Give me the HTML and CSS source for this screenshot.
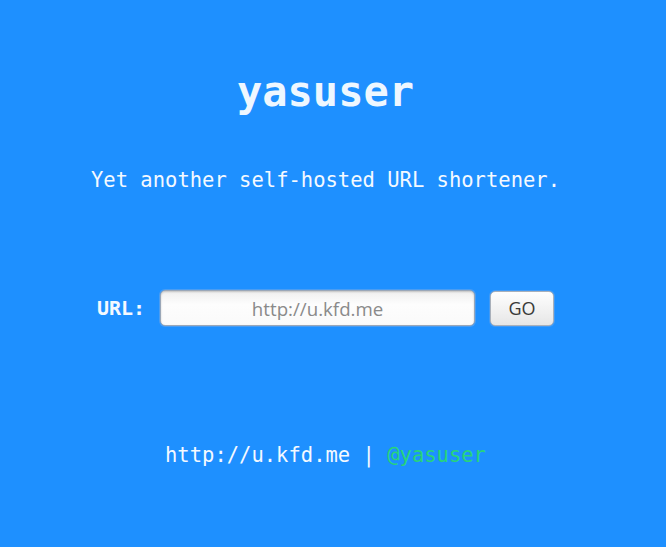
FILE: index.html
```html
<!DOCTYPE html>
<html>
<head>
<meta charset="utf-8">
<link rel="stylesheet" href="styles.css">
</head>
<body>
<main class="page">
  <h1 class="title">yasuser</h1>
  <p class="tagline">Yet another self-hosted URL shortener.</p>
  <form class="shorten">
    <label class="label" for="url">URL:</label>
    <input class="url-input" id="url" type="text" placeholder="http://u.kfd.me">
    <button class="go" type="button">GO</button>
  </form>
  <footer class="footer">http://u.kfd.me | <a class="handle" href="#">@yasuser</a></footer>
</main>
</body>
</html>
```
FILE: styles.css
```css
html, body {
  margin: 0;
  padding: 0;
  background: #1e90ff;
  height: 100%;
}
.page {
  box-sizing: border-box;
  width: 651px;
  display: flex;
  flex-direction: column;
  align-items: center;
  font-family: "DejaVu Sans Mono", monospace;
  color: #f4f9ff;
  padding-top: 66px;
}
.title {
  margin: 0;
  font-size: 42px;
  line-height: 52px;
  font-weight: bold;
  color: #eef7ff;
}
.tagline {
  margin: 50px 0 0 0;
  font-size: 20.5px;
  line-height: 24px;
}
.shorten {
  margin-top: 98px;
  display: flex;
  align-items: center;
  gap: 15px;
}
.label {
  font-weight: bold;
  font-size: 20px;
  line-height: 24px;
}
.url-input {
  box-sizing: border-box;
  width: 315px;
  height: 36px;
  border: 1px solid #9aa7b8;
  border-radius: 5px;
  background: linear-gradient(#efefef, #fdfdfd 40%, #fafafa);
  box-shadow: inset 0 1px 2px rgba(0,0,0,0.2), 0 0 0 1px rgba(120,170,230,0.5);
  font-family: "Open Sans", "DejaVu Sans", sans-serif;
  font-size: 18.7px;
  text-align: center;
  color: #333;
  padding: 0 8px;
  outline: none;
}
.url-input::placeholder {
  color: #8a8a8a;
}
.go {
  box-sizing: border-box;
  width: 64px;
  height: 35px;
  border: 1px solid #a9b0ba;
  border-radius: 5px;
  background: linear-gradient(#fefefe, #f0f0f0 60%, #e6e6e6);
  box-shadow: 0 0 0 1px rgba(120,170,230,0.4);
  font-family: "Open Sans", "DejaVu Sans", sans-serif;
  font-size: 18px;
  color: #3a3a3a;
  padding: 0;
}
.footer {
  margin-top: 117px;
  font-size: 20.5px;
  line-height: 24px;
}
.handle {
  color: #28d47a;
  text-decoration: none;
}
```
